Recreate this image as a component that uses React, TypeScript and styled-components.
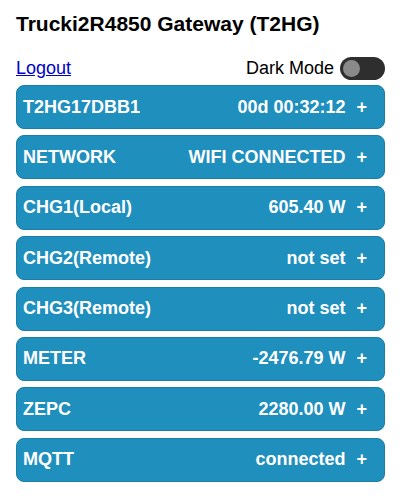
import React, { useState } from "react"
import styled, { createGlobalStyle } from "styled-components"

const Global = createGlobalStyle`
  body {
    margin: 0;
    background: #fff;
    font-family: "Liberation Sans", Arial, sans-serif;
  }
`

const Page = styled.div`
  padding: 0 16px;
  width: 369px;
`

const Title = styled.h1`
  margin: 0;
  padding-top: 12px;
  height: 47px;
  box-sizing: border-box;
  font-size: 21px;
  font-weight: bold;
  color: #000;
`

const TopBar = styled.div`
  display: flex;
  justify-content: space-between;
  align-items: center;
  height: 38px;
  padding-top: 4px;
  box-sizing: border-box;
`

const LogoutLink = styled.a`
  font-size: 18px;
  color: #0000cc;
  text-decoration: underline;
`

const ModeLabel = styled.label`
  display: flex;
  align-items: center;
  gap: 6px;
  font-size: 18px;
  color: #000;
`

const Switch = styled.span<{ $on: boolean }>`
  position: relative;
  width: 45px;
  height: 23px;
  border-radius: 12px;
  background: ${({ $on }) => ($on ? "#1c8dbb" : "#2e2e2e")};
  cursor: pointer;
  &::after {
    content: "";
    position: absolute;
    top: 3px;
    left: ${({ $on }) => ($on ? "25px" : "3px")};
    width: 17px;
    height: 17px;
    border-radius: 50%;
    background: #8a8a8a;
  }
`

const List = styled.div`
  display: flex;
  flex-direction: column;
  gap: 6.4px;
`

const Row = styled.div`
  display: flex;
  align-items: center;
  height: 44px;
  box-sizing: border-box;
  padding: 0 17px 0 6px;
  background: #1f8fbd;
  border: 1px solid #1a7ea6;
  border-radius: 8px;
  color: #fff;
  font-size: 18px;
  font-weight: bold;
`

const Label = styled.span`
  flex: 1;
`

const Value = styled.span`
  text-align: right;
`

const Plus = styled.span`
  margin-left: 11px;
  font-size: 18px;
`

const rows = [
  ["T2HG17DBB1", "00d 00:32:12"],
  ["NETWORK", "WIFI CONNECTED"],
  ["CHG1(Local)", "605.40 W"],
  ["CHG2(Remote)", "not set"],
  ["CHG3(Remote)", "not set"],
  ["METER", "-2476.79 W"],
  ["ZEPC", "2280.00 W"],
  ["MQTT", "connected"],
]

export default function App() {
  const [dark, setDark] = useState(false)
  return (
    <Page>
      <Global />
      <Title>Trucki2R4850 Gateway (T2HG)</Title>
      <TopBar>
        <LogoutLink href="#">Logout</LogoutLink>
        <ModeLabel>
          Dark Mode
          <Switch $on={dark} onClick={() => setDark(!dark)} />
        </ModeLabel>
      </TopBar>
      <List>
        {rows.map(([label, value]) => (
          <Row key={label}>
            <Label>{label}</Label>
            <Value>{value}</Value>
            <Plus>+</Plus>
          </Row>
        ))}
      </List>
    </Page>
  )
}
